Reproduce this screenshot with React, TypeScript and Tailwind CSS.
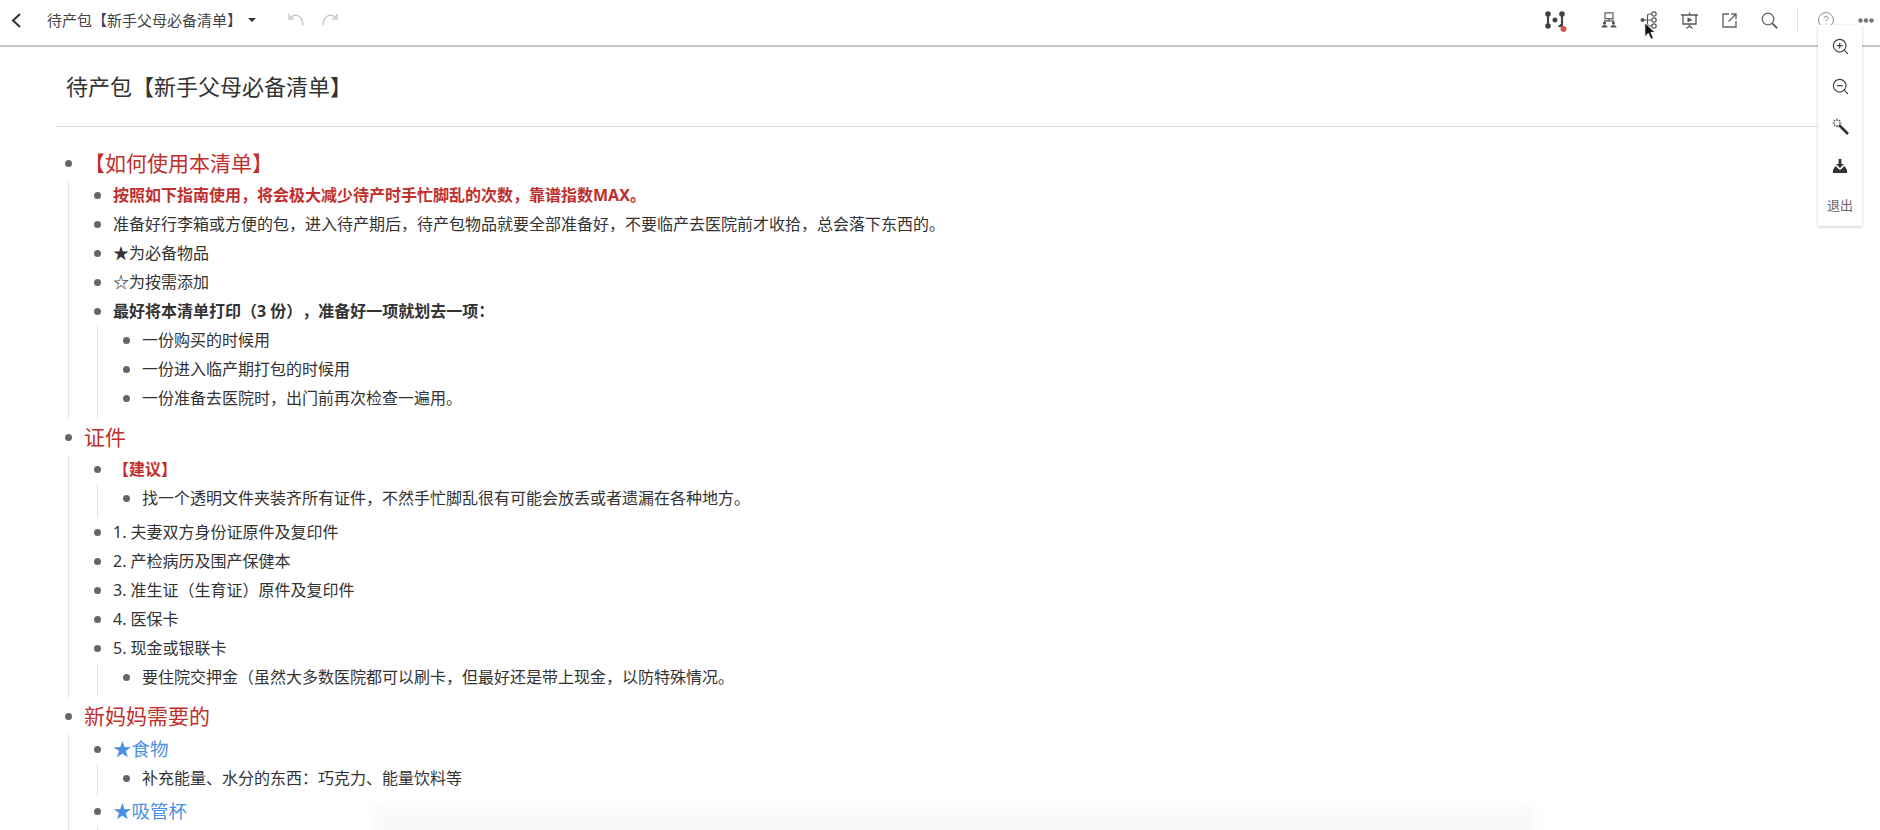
import type { ReactNode } from 'react';
import { ZoomIn, ZoomOut, CircleHelp } from 'lucide-react';

type Item = {
  text: string;
  tone?: 'title' | 'red' | 'blue' | 'bold';
  children?: Item[];
};

const outline: Item[] = [
  {
    text: '【如何使用本清单】',
    tone: 'title',
    children: [
      { text: '按照如下指南使用，将会极大减少待产时手忙脚乱的次数，靠谱指数MAX。', tone: 'red' },
      { text: '准备好行李箱或方便的包，进入待产期后，待产包物品就要全部准备好，不要临产去医院前才收拾，总会落下东西的。' },
      { text: '★为必备物品' },
      { text: '☆为按需添加' },
      {
        text: '最好将本清单打印（3 份），准备好一项就划去一项：',
        tone: 'bold',
        children: [
          { text: '一份购买的时候用' },
          { text: '一份进入临产期打包的时候用' },
          { text: '一份准备去医院时，出门前再次检查一遍用。' },
        ],
      },
    ],
  },
  {
    text: '证件',
    tone: 'title',
    children: [
      {
        text: '【建议】',
        tone: 'red',
        children: [{ text: '找一个透明文件夹装齐所有证件，不然手忙脚乱很有可能会放丢或者遗漏在各种地方。' }],
      },
      { text: '1. 夫妻双方身份证原件及复印件' },
      { text: '2. 产检病历及围产保健本' },
      { text: '3. 准生证（生育证）原件及复印件' },
      { text: '4. 医保卡' },
      {
        text: '5. 现金或银联卡',
        children: [{ text: '要住院交押金（虽然大多数医院都可以刷卡，但最好还是带上现金，以防特殊情况。' }],
      },
    ],
  },
  {
    text: '新妈妈需要的',
    tone: 'title',
    children: [
      {
        text: '★食物',
        tone: 'blue',
        children: [{ text: '补充能量、水分的东西：巧克力、能量饮料等' }],
      },
      { text: '★吸管杯', tone: 'blue', children: [{ text: '' }] },
    ],
  },
];

function toneClass(tone?: Item['tone']) {
  if (tone === 'title') return 'text-[21px] leading-[35px] text-[#bf2f2d]';
  if (tone === 'blue') return 'text-[18.5px] leading-[30px] text-[#4a90e2]';
  if (tone === 'red') return 'text-[16px] leading-[29px] font-bold text-[#bf2f2d]';
  if (tone === 'bold') return 'text-[16px] leading-[29px] font-bold text-[#333333]';
  return 'min-h-[29px] text-[16px] leading-[29px] text-[#333333]';
}

function OutlineList({ items, depth, parentTone }: { items: Item[]; depth: number; parentTone?: Item['tone'] }) {
  if (depth === 0) {
    return (
      <ul className="flex flex-col pl-[9px]">
        {items.map((item) => (
          <OutlineRow key={item.text} item={item} depth={depth} />
        ))}
      </ul>
    );
  }
  // deepest lists carry a little more space below, except under the blue topics
  const bottom = depth === 1 ? 'pb-[1px]' : parentTone === 'blue' ? 'pb-[3px]' : 'pb-[5px]';
  return (
    <ul className={`ml-[3px] flex flex-col border-l border-[#e4e4e4] pl-[25px] ${bottom}`}>
      {items.map((item) => (
        <OutlineRow key={item.text} item={item} depth={depth} />
      ))}
    </ul>
  );
}

function OutlineRow({ item, depth }: { item: Item; depth: number }) {
  return (
    <li className={item.tone === 'title' ? 'mt-[1px] first:mt-0' : ''}>
      <div className="flex items-center">
        <span className="mr-[12px] h-[7px] w-[7px] shrink-0 rounded-full bg-[#666666]" />
        <span className={toneClass(item.tone)}>{item.text}</span>
      </div>
      {item.children && <OutlineList items={item.children} depth={depth + 1} parentTone={item.tone} />}
    </li>
  );
}

function ToolButton({ children }: { children: ReactNode }) {
  return <button className="flex h-[40px] w-[40px] items-center justify-center text-[#555555]">{children}</button>;
}

function BackIcon() {
  return (
    <svg width="10" height="15" viewBox="0 0 10 15" fill="none" stroke="#333" strokeWidth="2">
      <path d="M9 1L2 7.500l7 6.500" />
    </svg>
  );
}

function UndoIcon({ flip }: { flip?: boolean }) {
  return (
    <svg className={flip ? '-scale-x-100' : ''} width="16" height="14" viewBox="0 0 16 14" fill="none" stroke="#c8c8c8" strokeWidth="1.5">
      <path d="M1.500 5.500C5 1 12.500 .5 14.500 9c.2 1 .2 2 .2 3.500" />
      <path d="M1.200 1v5h5" />
    </svg>
  );
}

function GraphIcon() {
  return (
    <svg width="24" height="24" viewBox="0 0 24 24" fill="none" stroke="#444" strokeWidth="2.200">
      <path d="M5 6v12M19 6v9" />
      <circle cx="5" cy="6" r="2.800" fill="#444" stroke="none" />
      <circle cx="19" cy="6" r="2.800" fill="#444" stroke="none" />
      <circle cx="5" cy="18" r="2.800" fill="#444" stroke="none" />
      <circle cx="12" cy="12" r="2.500" fill="#444" stroke="none" />
      <path d="M20 13.500l-5.500 5.500H20z" fill="#444" stroke="none" />
      <circle cx="20.500" cy="21" r="3" fill="#d9534f" stroke="none" />
    </svg>
  );
}

function OrgIcon() {
  return (
    <svg width="16" height="16" viewBox="0 0 18 18" fill="none" stroke="#555" strokeWidth="1.300">
      <rect x="4.500" y="1" width="9" height="6.500" />
      <path d="M9 7.500v2.500M4 11.500V10h10v1.500" />
      <circle cx="4" cy="12.500" r="1.800" fill="#555" stroke="none" />
      <circle cx="14" cy="12.500" r="1.800" fill="#555" stroke="none" />
      <path d="M.5 17.500c0-4 7-4 7 0zM10.500 17.500c0-4 7-4 7 0z" fill="#555" stroke="none" />
    </svg>
  );
}

function MindIcon() {
  return (
    <svg width="18" height="18" viewBox="0 0 18 18" fill="none" stroke="#555" strokeWidth="1.200">
      <circle cx="14" cy="3" r="2.200" />
      <circle cx="14" cy="9" r="2.200" />
      <circle cx="14" cy="15" r="2.200" />
      <path d="M2 9h10M7.500 9V5c0-1.500.6-2 2-2h2.500M7.500 9v4c0 1.500.6 2 2 2h2.500" />
      <circle cx="2.500" cy="9" r="2" fill="#555" stroke="none" />
    </svg>
  );
}

function ShowIcon() {
  return (
    <svg width="17" height="17" viewBox="0 0 17 17" fill="none" stroke="#555" strokeWidth="1.300">
      <path d="M0 3h17M8.500 .5V3M2 3v9h13V3M8.500 12v2M5.500 16.500l3-2.500 3 2.500" />
      <path d="M6.500 5.200l5 2.600-5 2.600z" fill="#555" stroke="none" />
    </svg>
  );
}

function ShareIcon() {
  return (
    <svg width="15" height="15" viewBox="0 0 15 15" fill="none" stroke="#666" strokeWidth="1.400">
      <path d="M7 1H1v13h13V8M9 1h5v5M14 1L6.500 8.500" />
    </svg>
  );
}

function SearchIcon() {
  return (
    <svg width="17" height="17" viewBox="0 0 17 17" fill="none" stroke="#666">
      <circle cx="7" cy="7" r="5.800" strokeWidth="1.300" />
      <path d="M11.200 11.200l5 5" strokeWidth="2" />
    </svg>
  );
}

function DotsIcon() {
  return (
    <svg width="16" height="5" viewBox="0 0 16 5" fill="#777">
      <circle cx="2.500" cy="2.500" r="2.200" />
      <circle cx="8" cy="2.500" r="2.200" />
      <circle cx="13.500" cy="2.500" r="2.200" />
    </svg>
  );
}

function WandIcon() {
  return (
    <svg width="17" height="17" viewBox="0 0 17 17" fill="none">
      <path d="M7 7l9 9" stroke="#333" strokeWidth="2.600" />
      <path
        d="M5 .5v2.500M5 7v2.500M.5 5H3M7 5h2.500M1.800 1.800l1.500 1.500M8.200 1.800L6.700 3.300M1.800 8.200l1.500-1.500"
        stroke="#444"
        strokeWidth="1.100"
      />
    </svg>
  );
}

function ExportIcon() {
  return (
    <svg width="16" height="16" viewBox="0 0 16 16" fill="#333">
      <path d="M6.600 1h2.800v5H12L8 10 4 6h2.600z" />
      <path d="M3 8.500h1.300L7 11.500h2l2.700-3H13l2 3.500v3H1v-3z" />
    </svg>
  );
}

function Cursor() {
  return (
    <svg className="absolute top-[22px] left-[1644px]" width="12" height="19" viewBox="0 0 14 22">
      <path d="M1 1v16l4-4 3 7 3-1-3-7h5z" fill="#111" stroke="#fff" strokeWidth="1" />
    </svg>
  );
}

export default function App() {
  return (
    <div className="relative h-[830px] w-[1880px] overflow-hidden bg-white font-['Noto_Sans','Noto_Sans_CJK_SC',sans-serif] text-[#333333] [text-spacing-trim:space-all]">
      {/* Toolbar */}
      <header className="flex h-[47px] items-center justify-between border-b-2 border-[#c4c4c4] pb-[5px]">
        <div className="flex items-center">
          <span className="ml-[11px]"><BackIcon /></span>
          <span className="ml-[26px] text-[15px] text-[#444444]">待产包【新手父母必备清单】</span>
          <span className="ml-[6px] h-0 w-0 border-x-[4px] border-t-[4px] border-x-transparent border-t-[#333333]" />
          <span className="ml-[32px]"><UndoIcon /></span>
          <span className="ml-[18px]"><UndoIcon flip /></span>
        </div>
        <div className="mr-[-6px] flex items-center">
          <ToolButton><GraphIcon /></ToolButton>
          <div className="w-[14px]" />
          <ToolButton><OrgIcon /></ToolButton>
          <ToolButton><MindIcon /></ToolButton>
          <ToolButton><ShowIcon /></ToolButton>
          <ToolButton><ShareIcon /></ToolButton>
          <ToolButton><SearchIcon /></ToolButton>
          <div className="ml-[8px] h-[26px] w-px bg-[#e2e2e2]" />
          <div className="w-[8px]" />
          <ToolButton><CircleHelp className="h-[18px] w-[18px] text-[#888888]" strokeWidth={1.3} /></ToolButton>
          <ToolButton><DotsIcon /></ToolButton>
        </div>
      </header>

      {/* Document */}
      <main className="pr-[40px] pl-[56px]">
        <h1 className="flex h-[80px] items-center border-b border-[#dddddd] pl-[10px] text-[22px] font-normal text-[#333333]">
          待产包【新手父母必备清单】
        </h1>
        <div className="pt-[19px]">
          <OutlineList items={outline} depth={0} />
        </div>
      </main>

      {/* Zoom panel */}
      <aside className="absolute top-[25px] left-[1818px] flex h-[201px] w-[44px] flex-col items-center bg-white pt-[1px] text-[#444444] shadow-[0_1px_3px_rgba(0,0,0,0.2)]">
        <ToolButton><ZoomIn className="h-[19px] w-[19px] text-[#444444]" strokeWidth={1.5} /></ToolButton>
        <ToolButton><ZoomOut className="h-[19px] w-[19px] text-[#444444]" strokeWidth={1.5} /></ToolButton>
        <ToolButton><WandIcon /></ToolButton>
        <ToolButton><ExportIcon /></ToolButton>
        <button className="flex h-[40px] w-[40px] items-center justify-center text-[13px] text-[#666666]">退出</button>
      </aside>

      <Cursor />

      {/* Blurred toast at the bottom edge */}
      <div className="absolute top-[804px] left-[375px] h-[40px] w-[1160px] bg-[#f9f9f9] blur-[5px]" />
    </div>
  );
}
